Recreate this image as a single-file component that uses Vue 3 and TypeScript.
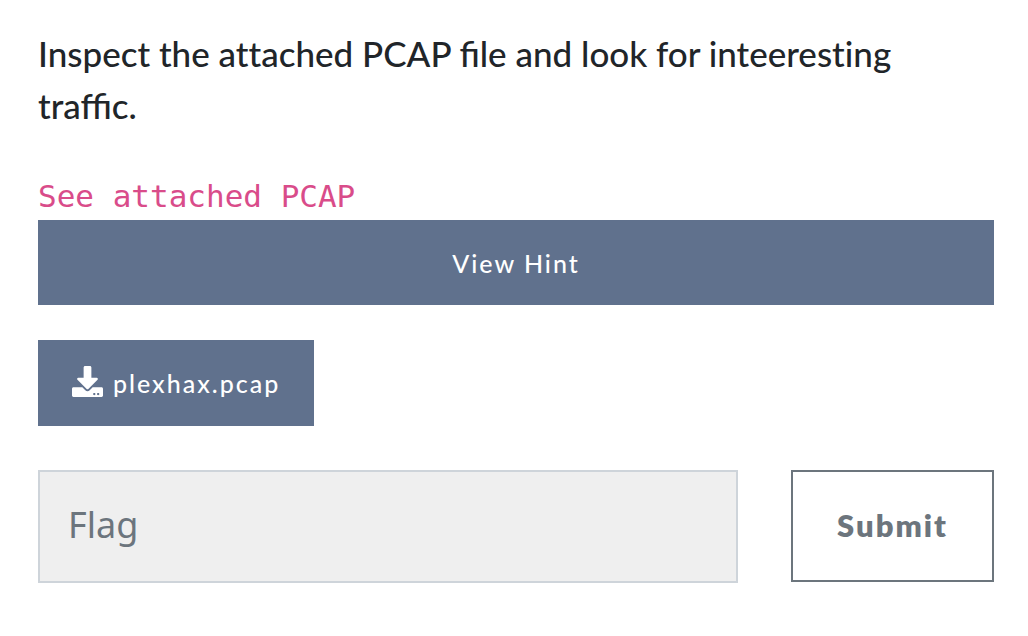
<script setup lang="ts">
import { ref } from 'vue'

const flag = ref('')
const fileName = 'plexhax.pcap'
</script>

<template>
  <main class="challenge">
    <p class="description">Inspect the <span class="plain">attached</span> PCAP file and look for <span class="plain">inteeresting</span> traffic.</p>
    <code class="note">See attached PCAP</code>
    <button type="button" class="solid hint">View Hint</button>
    <a href="#" class="solid file">
      <svg class="icon" viewBox="0 0 512 512" aria-hidden="true">
        <path fill="currentColor" d="M216 0h80c13.300 0 24 10.700 24 24v168h87.700c17.800 0 26.700 21.500 14.100 34.100L269.700 378.300c-7.500 7.500-19.800 7.500-27.300 0L90.100 226.100c-12.600-12.600-3.700-34.100 14.100-34.100H192V24c0-13.300 10.700-24 24-24zm296 376v112c0 13.300-10.700 24-24 24H24c-13.300 0-24-10.700-24-24V376c0-13.300 10.700-24 24-24h146.700l49 49c20.100 20.100 52.500 20.100 72.600 0l49-49H488c13.300 0 24 10.700 24 24zm-124 88c0-11-9-20-20-20s-20 9-20 20 9 20 20 20 20-9 20-20zm64 0c0-11-9-20-20-20s-20 9-20 20 9 20 20 20 20-9 20-20z" />
      </svg>
      <span>{{ fileName }}</span>
    </a>
    <form class="answer" @submit.prevent>
      <input v-model="flag" type="text" name="flag" placeholder="Flag" aria-label="Flag" />
      <button type="submit" class="submit">Submit</button>
    </form>
  </main>
</template>

<style>
body {
  margin: 0;
  background: #fff;
}
</style>

<style scoped>
.challenge {
  display: flex;
  flex-direction: column;
  align-items: flex-start;
  padding: 27px 34px 0 38px;
  font-family: Lato, "Liberation Sans", sans-serif;
  color: #212529;
}

.description {
  margin: 0 0 41px;
  font-size: 35px;
  font-weight: 500;
  line-height: 52px;
}

.plain {
  font-variant-ligatures: none;
}

.note {
  font-family: "DejaVu Sans Mono", "Liberation Mono", monospace;
  font-size: 31px;
  line-height: 48px;
  color: #d94c8a;
}

.solid {
  display: flex;
  align-items: center;
  justify-content: center;
  box-sizing: border-box;
  border: 0;
  background: #60718d;
  color: #fff;
  font-family: inherit;
  font-size: 25px;
  font-weight: 500;
  line-height: 37px;
  letter-spacing: 2px;
  text-decoration: none;
  padding: 25px 34px 23px;
}

.hint {
  width: 100%;
  margin-bottom: 35px;
}

.file {
  gap: 10px;
  padding-bottom: 24px;
  margin-bottom: 44px;
}

.icon {
  width: 31px;
  height: 31px;
  margin-bottom: 4px;
}

.answer {
  display: flex;
  align-items: flex-start;
  gap: 53px;
  width: 100%;
}

input {
  flex: 1;
  min-width: 0;
  box-sizing: border-box;
  height: 113px;
  padding: 0 28px 5px;
  border: 2px solid #ced4da;
  border-radius: 0;
  background: #efefef;
  color: #495057;
  font-family: "Noto Sans", sans-serif;
  font-size: 36px;
}

input::placeholder {
  color: #6c757d;
  opacity: 1;
}

.submit {
  box-sizing: border-box;
  height: 112px;
  padding: 0 44px 2px;
  border: 2px solid #6c757d;
  background: #fff;
  color: #6c757d;
  font-family: inherit;
  font-size: 31px;
  font-weight: 800;
  letter-spacing: 2px;
}
</style>
